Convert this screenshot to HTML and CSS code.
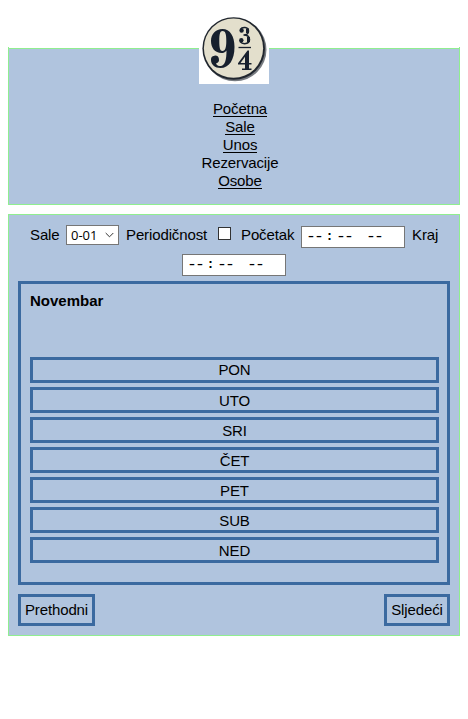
FILE: index.html
```
<!DOCTYPE html>
<html lang="bs">
<head>
<meta charset="utf-8">
<title>Rezervacije</title>
<link rel="stylesheet" href="styles.css">
</head>
<body>
<header class="header">
  <svg class="logo" viewBox="0 0 70 70" role="img" aria-label="9 3/4">
    <rect width="70" height="70" fill="#fff"/>
    <circle cx="36" cy="35.8" r="31.5" fill="#777b80"/>
    <circle cx="34.7" cy="34.5" r="31.3" fill="#20262e"/>
    <circle cx="34.5" cy="34.2" r="29.6" fill="#e3dfcc"/>
    <g fill="#17202d">
      <path fill-rule="evenodd" d="M23.500 15C31 15 35.500 22 35.500 33C35.500 46 30 54 21.500 54C16 54 12 50.500 12 46A4 4 0 1 1 17 49.500C18 51.500 20 52.300 22 52C26 51 27.500 46 27.500 36.500C26 38.500 24.500 39 22.500 39C16 39 12 34 12 27C12 20 16.500 15 23.500 15ZM23.500 17C21 17 20.300 20 20.300 27C20.300 34 21 37 23.500 37C26.500 37 27.300 33 27.300 27C27.300 20 26.500 17 23.500 17Z"/>
      <circle cx="42.600" cy="16.500" r="2.200"/>
      <circle cx="42.300" cy="26.300" r="2.200"/>
      <path fill-rule="evenodd" d="M39 49.300L48.500 36.500H50V49H52.500V50.500H50V54.500H52.500V56H43V54.500H46V50.500H39ZM41.500 49H46V42.800Z"/>
    </g>
    <g fill="none" stroke="#17202d">
      <path d="M41.300 15.500C43 12.500 49.500 12.500 49.500 17C49.500 20 47.500 21 44.500 21C49 21 50.500 23 50.500 25.500C50.500 30 44 31 41 27.500" stroke-width="1.5"/>
      <path d="M48.500 14.500V19M49.500 23V28" stroke-width="3"/>
      <path d="M39.500 33.500H52" stroke-width="1.3"/>
    </g>
  </svg>
  <nav class="menu">
    <a class="link">Početna</a>
    <a class="link">Sale</a>
    <a class="link">Unos</a>
    <span>Rezervacije</span>
    <a class="link">Osobe</a>
  </nav>
</header>
<main class="content">
  <div class="filters">
    <span class="sale-label">Sale</span>
    <div class="select"><span>0-01</span><svg class="chevron" viewBox="0 0 9 6"><path d="M.7 1L4.5 4.8L8.3 1"/></svg></div>
    <span class="period-label">Periodičnost</span>
    <span class="checkbox"></span>
    <span class="start-label">Početak</span>
    <div class="time"><span>--</span><span class="colon">:</span><span>--</span><span class="ampm">--</span></div>
    <span class="end-label">Kraj</span>
  </div>
  <div class="filters second">
    <div class="time"><span>--</span><span class="colon">:</span><span>--</span><span class="ampm">--</span></div>
  </div>
  <section class="calendar">
    <h1 class="month">Novembar</h1>
    <div class="days">
      <div class="day">PON</div>
      <div class="day">UTO</div>
      <div class="day">SRI</div>
      <div class="day">ČET</div>
      <div class="day">PET</div>
      <div class="day">SUB</div>
      <div class="day">NED</div>
    </div>
  </section>
  <div class="pager">
    <button class="button previous">Prethodni</button>
    <button class="button next">Sljedeći</button>
  </div>
</main>
</body>
</html>
```
FILE: styles.css
```
* { box-sizing: border-box; }
body {
  margin: 0;
  padding: 14px 8px 0;
  background: #fff;
  color: #000;
  font: 15px/18px "Liberation Sans", Arial, sans-serif;
  letter-spacing: -0.12px;
}
.header {
  height: 191px;
  border: solid lightgreen;
  border-width: 0 1px 1px;
  border-image: linear-gradient(transparent 34px, lightgreen 34px) 1;
  background: linear-gradient(transparent 34px, lightgreen 34px, lightgreen 35px, lightsteelblue 35px);
  display: flex;
  flex-direction: column;
  align-items: center;
}
.logo {
  display: block;
  width: 70px;
  height: 70px;
  flex: none;
}
.menu {
  display: flex;
  flex-direction: column;
  align-items: center;
  margin-top: 16px;
  padding-left: 12px;
}
.link { height: 17px; margin-bottom: 1px; border-bottom: 1px solid #000; }
.content {
  height: 422px;
  margin-top: 9px;
  padding: 10px 9px 9px;
  border: 1px solid lightgreen;
  background: lightsteelblue;
}
.filters {
  display: flex;
  align-items: flex-start;
  height: 29px;
  padding-left: 12px;
  white-space: nowrap;
}
.filters > span { margin-top: 1px; }
.filters .sale-label { width: 36px; }
.select {
  display: flex;
  align-items: center;
  justify-content: space-between;
  width: 53px;
  height: 20px;
  padding: 0 4px;
  border: 1px solid #767676;
  background: #fff;
  font: 13px/18px "Open Sans", sans-serif;
  letter-spacing: 0;
}
.chevron { width: 9px; height: 6px; fill: none; stroke: #333; stroke-width: 1; }
.filters .period-label { width: 92px; margin-left: 7px; }
.filters .checkbox {
  width: 13px;
  height: 13px;
  margin-top: 2px;
  border: 1px solid #333;
  background: #fff;
}
.filters .start-label { width: 60px; margin-left: 10px; }
.time {
  display: flex;
  width: 104px;
  height: 22px;
  margin-top: 1px;
  padding-left: 4px;
  border: 1px solid #767676;
  background: #fff;
  font: 16.5px/20px "Liberation Mono", monospace;
  letter-spacing: -1.9px;
}
.time span { width: 16px; }
.time .colon {
  width: 14px;
  padding-left: 1px;
  font-size: 13.33px;
  line-height: 20px;
  letter-spacing: 0;
  text-align: center;
  font-weight: bold;
}
.time .ampm { margin-left: 14px; }
.filters .end-label { margin-left: 7px; }
.second {
  height: 27px;
  padding-left: 0;
  justify-content: center;
}
.second .time { margin-top: 0; }
.calendar {
  height: 304px;
  padding: 8px 8px 0 9px;
  border: 3px solid #3b6aa0;
}
.month { height: 65px; margin: 0; font-size: 15px; line-height: 18px; letter-spacing: 0; }
.days { display: grid; gap: 4px; }
.day {
  height: 26px;
  border: 3px solid #3b6aa0;
  line-height: 21px;
  text-align: center;
}
.day:first-child { line-height: 19px; }
.pager { display: flex; justify-content: space-between; margin-top: 9px; }
.button {
  height: 32px;
  padding: 0;
  border: 3px solid #3b6aa0;
  border-radius: 0;
  background: transparent;
  color: #000;
  font: inherit;
  letter-spacing: inherit;
}
.previous { width: 77px; }
.next { width: 66px; }
```
